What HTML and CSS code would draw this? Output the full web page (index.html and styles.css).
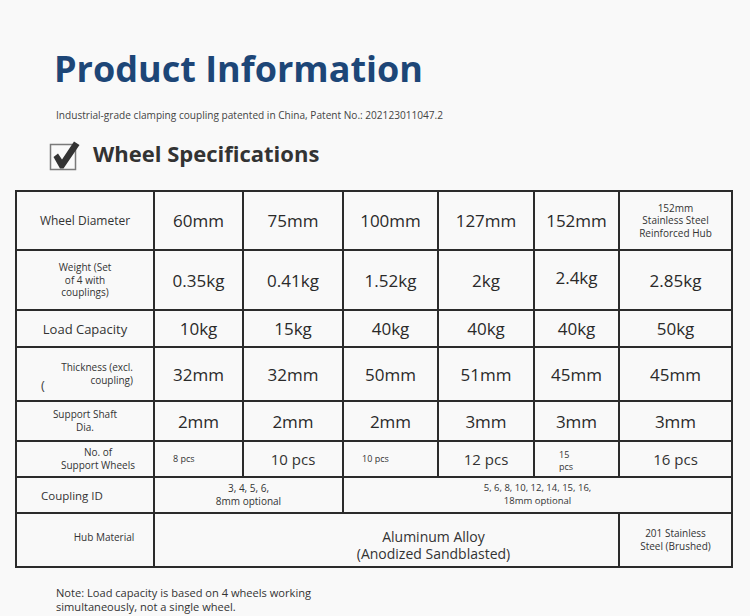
FILE: index.html
```html
<!DOCTYPE html>
<html>
<head>
<meta charset="utf-8">
<link rel="stylesheet" href="styles.css">
</head>
<body>
<div class="page">
  <h1 class="title">Product Information</h1>
  <p class="subtitle">Industrial-grade clamping coupling patented in China, Patent No.: 202123011047.2</p>
  <div class="section-head">
    <svg class="check" width="32" height="36" viewBox="0 0 32 36">
      <rect x="2.5" y="9.5" width="25" height="25" fill="none" stroke="#7a7a7a" stroke-width="1.5"/>
      <path d="M5.5 22 L10 18.5 L14 24.5 L26 6.5 L31.5 10 L15.5 33.5 L12 33.5 Z" fill="#333"/>
    </svg>
    <h2 class="section-title">Wheel Specifications</h2>
  </div>

  <div class="spec">
    <div class="c lbl">Wheel Diameter</div>
    <div class="c val">60mm</div>
    <div class="c val">75mm</div>
    <div class="c val">100mm</div>
    <div class="c val">127mm</div>
    <div class="c val">152mm</div>
    <div class="c tiny">152mm<br>Stainless Steel<br>Reinforced Hub</div>

    <div class="c tiny">Weight (Set<br>of 4 with<br>couplings)</div>
    <div class="c val">0.35kg</div>
    <div class="c val">0.41kg</div>
    <div class="c val">1.52kg</div>
    <div class="c val">2kg</div>
    <div class="c val up">2.4kg</div>
    <div class="c val">2.85kg</div>

    <div class="c lbl big">Load Capacity</div>
    <div class="c val">10kg</div>
    <div class="c val">15kg</div>
    <div class="c val">40kg</div>
    <div class="c val">40kg</div>
    <div class="c val">40kg</div>
    <div class="c val">50kg</div>

    <div class="c tiny right">Thickness (excl.<br>coupling)<span class="stray">(</span></div>
    <div class="c val">32mm</div>
    <div class="c val">32mm</div>
    <div class="c val">50mm</div>
    <div class="c val">51mm</div>
    <div class="c val">45mm</div>
    <div class="c val">45mm</div>

    <div class="c tiny">Support Shaft<br>Dia.</div>
    <div class="c val">2mm</div>
    <div class="c val">2mm</div>
    <div class="c val">2mm</div>
    <div class="c val">3mm</div>
    <div class="c val">3mm</div>
    <div class="c val">3mm</div>

    <div class="c tiny shift">No. of<br>Support Wheels</div>
    <div class="c mini left">8 pcs</div>
    <div class="c pcs">10 pcs</div>
    <div class="c mini left">10 pcs</div>
    <div class="c pcs">12 pcs</div>
    <div class="c mini left fifteen">15<br>pcs</div>
    <div class="c pcs">16 pcs</div>

    <div class="c lbl start">Coupling ID</div>
    <div class="c tiny span2">3, 4, 5, 6,<br>8mm optional</div>
    <div class="c tiny span4">5, 6, 8, 10, 12, 14, 15, 16,<br>18mm optional</div>

    <div class="c tiny hub">Hub Material</div>
    <div class="c alu span5">Aluminum Alloy<br>(Anodized Sandblasted)</div>
    <div class="c tiny">201 Stainless<br>Steel (Brushed)</div>
  </div>

  <p class="note">Note: Load capacity is based on 4 wheels working<br>simultaneously, not a single wheel.</p>
</div>
</body>
</html>
```

FILE: styles.css
```css
html, body {
  margin: 0;
  padding: 0;
  background: #f9f9f9;
}
body {
  font-family: "Open Sans", "Noto Sans", sans-serif;
  color: #333;
}
.page {
  width: 750px;
  height: 616px;
  overflow: hidden;
  padding-top: 49px;
  box-sizing: border-box;
}
.title {
  margin: 0 0 0 54px;
  font-size: 36px;
  line-height: 40px;
  font-weight: 700;
  color: #1d4677;
}
.subtitle {
  margin: 19px 0 0 56px;
  font-size: 10.1px;
  line-height: 14px;
  color: #444;
}
.section-head {
  display: flex;
  align-items: center;
  margin: 14px 0 0 48px;
  height: 34px;
}
.check {
  display: block;
  margin-right: 13px;
}
.section-title {
  margin: 0;
  font-size: 22px;
  line-height: 30px;
  font-weight: 700;
  color: #333;
}
.spec {
  margin: 20px 0 0 15px;
  width: 718px;
  box-sizing: border-box;
  display: grid;
  grid-template-columns: 136px 87px 98px 93px 94px 83px 111px;
  grid-template-rows: 57px 58px 35px 52px 38px 34px 34px 52px;
  gap: 2px;
  padding: 2px;
  background: #2b2b2b;
}
.c {
  background: #f9f9f9;
  display: flex;
  align-items: center;
  justify-content: center;
  text-align: center;
  color: #333;
  position: relative;
}
.lbl {
  font-size: 12px;
}
.big {
  font-size: 13px;
}
.val {
  font-size: 17px;
  color: #2a2a2a;
}
.up {
  padding-bottom: 6px;
  box-sizing: border-box;
}
.tiny {
  font-size: 10px;
  line-height: 12.6px;
}
.right {
  justify-content: flex-end;
  text-align: right;
  padding-right: 20px;
  padding-bottom: 1px;
}
.stray {
  position: absolute;
  left: 24px;
  top: 29px;
  font-size: 13px;
  line-height: 16px;
  color: #444;
}
.shift {
  padding-left: 26px;
}
.mini {
  font-size: 9px;
  line-height: 12.5px;
}
.left {
  justify-content: flex-start;
  text-align: left;
  padding-left: 18px;
}
.fifteen {
  padding-left: 24px;
  padding-top: 4px;
}
.pcs {
  font-size: 15px;
}
.start {
  justify-content: flex-start;
  padding-left: 24px;
  font-size: 11.5px;
}
.span2 {
  grid-column: span 2;
}
.span4 {
  grid-column: span 4;
  font-size: 9.5px;
}
.span5 {
  grid-column: span 5;
}
.hub {
  padding-left: 38px;
  padding-bottom: 6px;
}
.alu {
  font-size: 14px;
  line-height: 17.5px;
  padding-left: 94px;
  padding-top: 10px;
}
.note {
  margin: 18px 0 0 56px;
  font-size: 11.1px;
  line-height: 13.5px;
  color: #333;
}
```
